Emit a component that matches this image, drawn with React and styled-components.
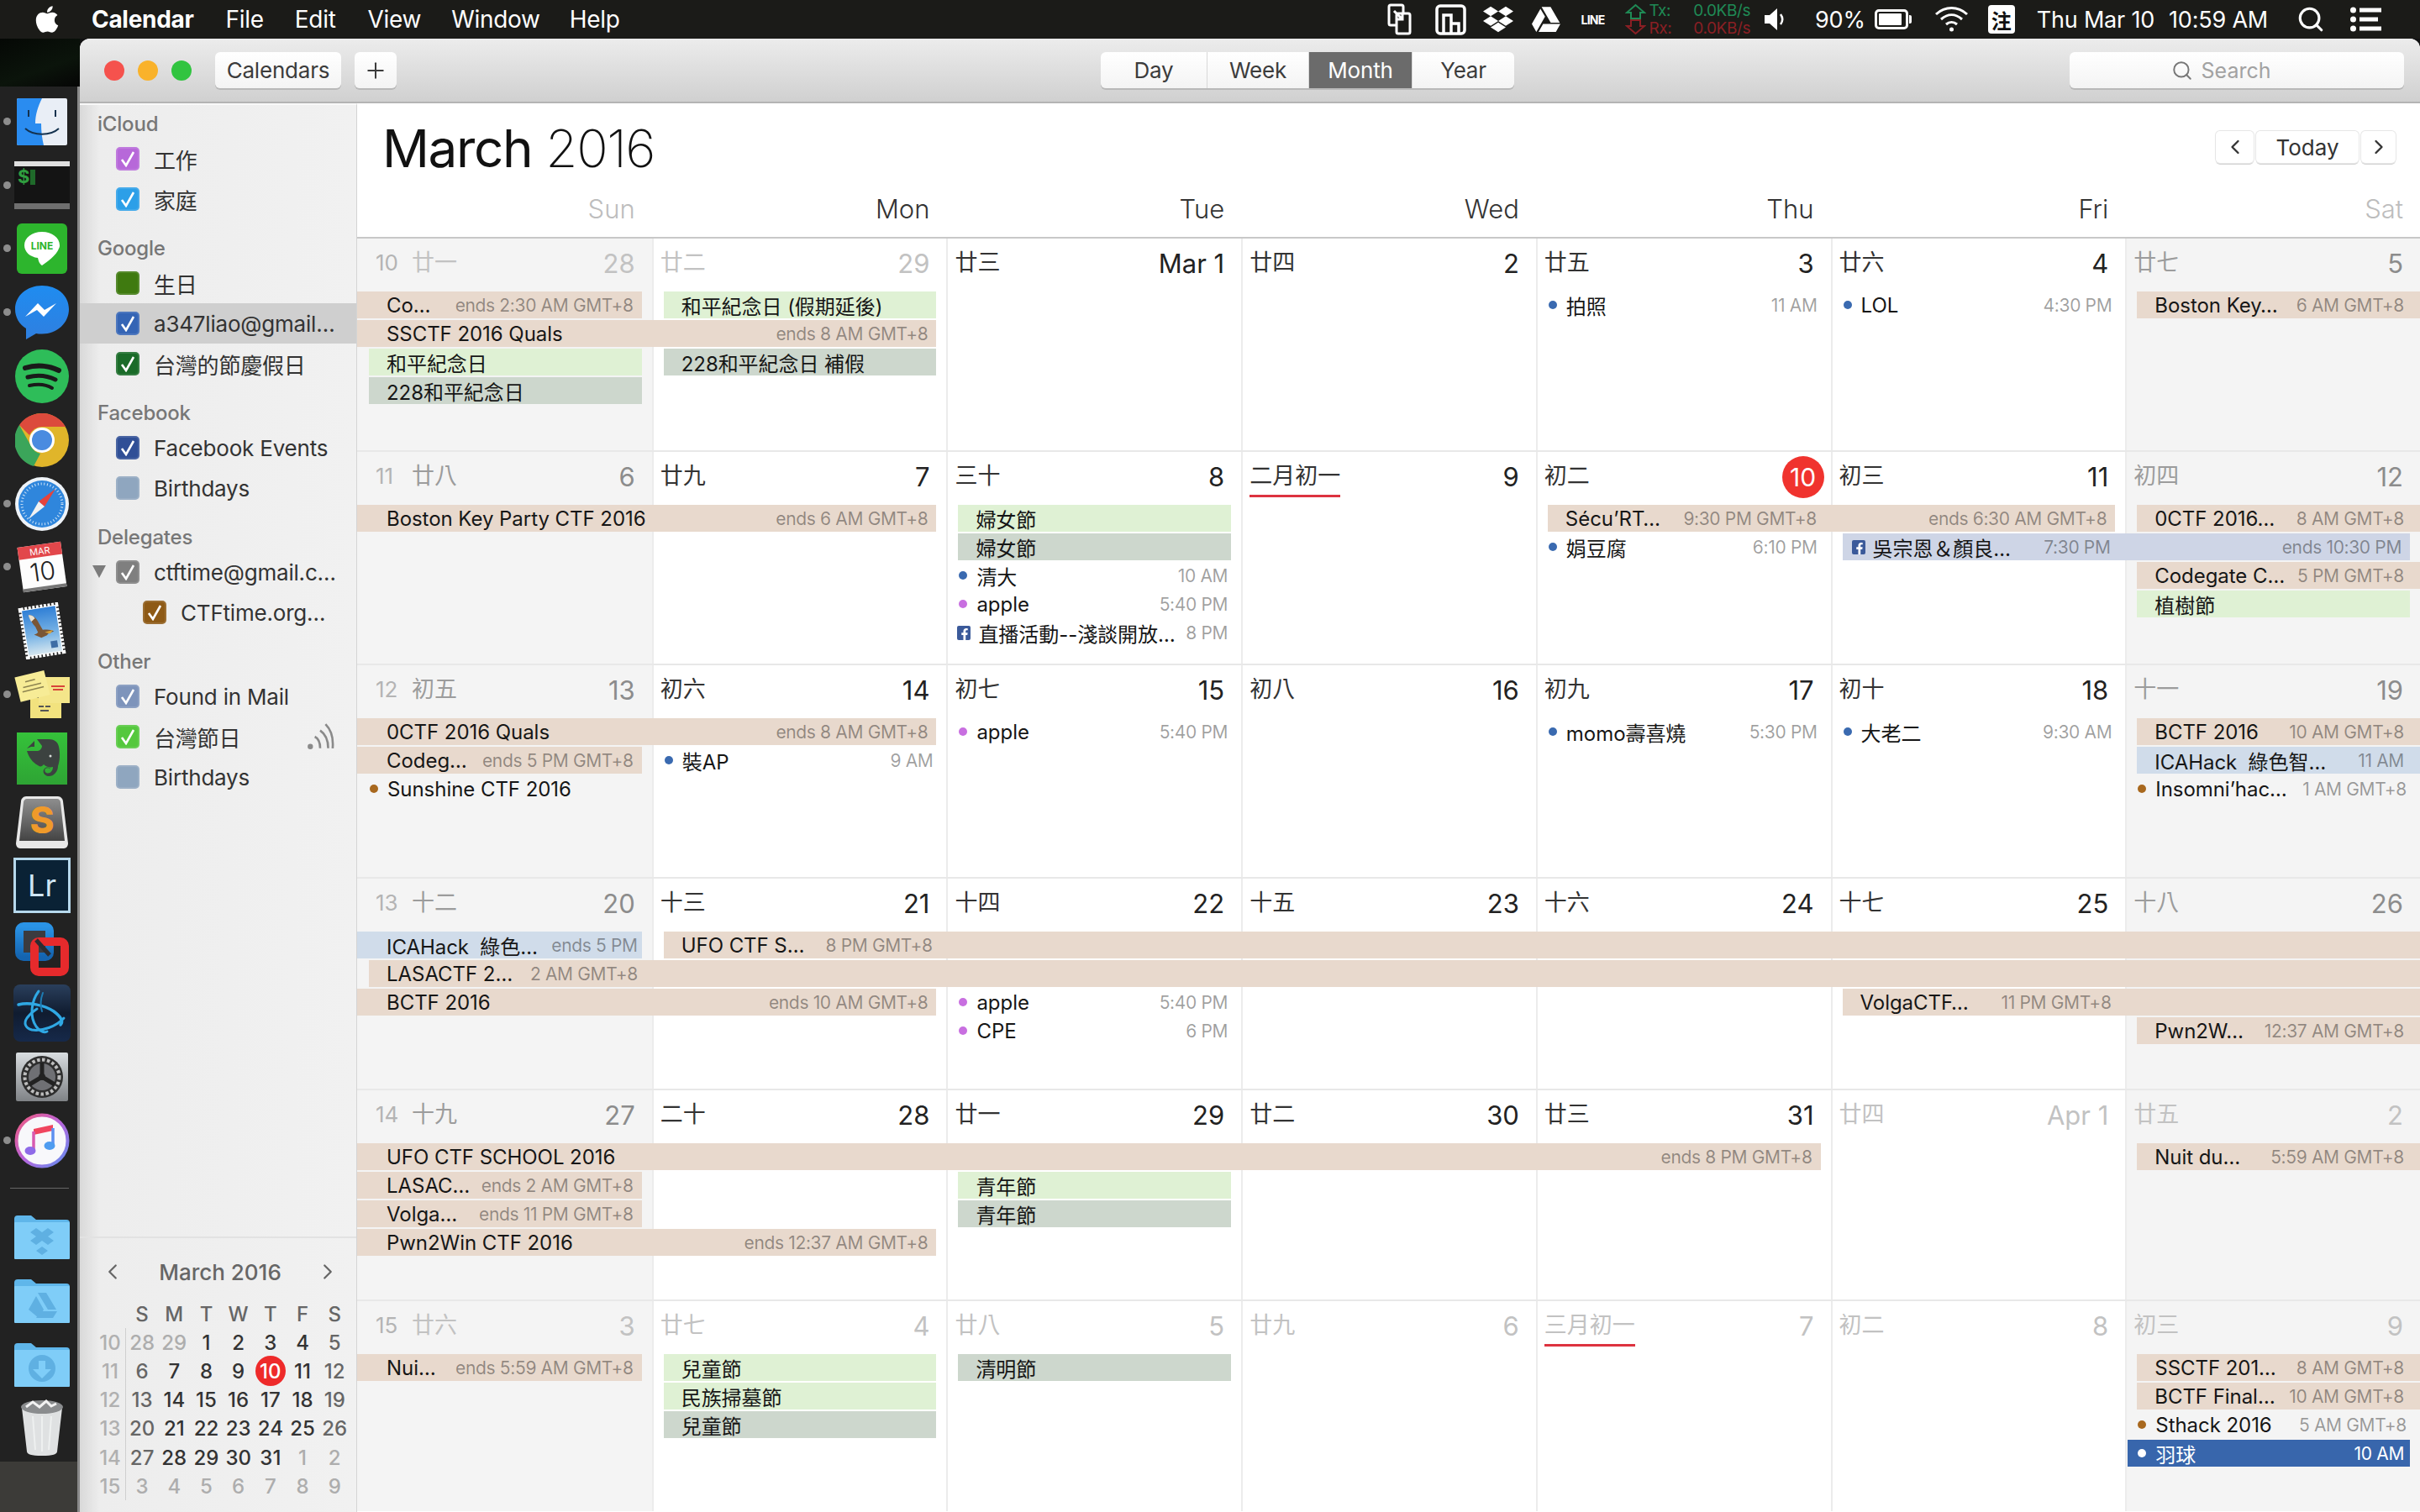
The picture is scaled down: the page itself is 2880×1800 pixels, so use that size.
import React from 'react';
import styled, { createGlobalStyle } from 'styled-components';
import { FaApple, FaDropbox, FaGoogleDrive, FaFacebookF } from 'react-icons/fa';
import { Search, Plus, ChevronLeft, ChevronRight } from 'lucide-react';

const SANS = `Inter, "Noto Sans CJK TC", sans-serif`;

const GlobalStyle = createGlobalStyle`
  html, body { margin: 0; padding: 0; background: #111; }
  body { font-family: ${SANS}; width: 2880px; height: 1800px; overflow: hidden; }
  * { box-sizing: border-box; }
`;

/* ---------- data ---------- */

const BLUE_DOT = '#3a6ab0';
const PURPLE_DOT = '#c86fe0';
const BROWN_DOT = '#a8681e';

const WEEKS = [
  {
    num: 10, height: 254, strong: true,
    days: [['廿一', '28', 1], ['廿二', '29', 1], ['廿三', 'Mar 1'], ['廿四', '2'], ['廿五', '3'], ['廿六', '4'], ['廿七', '5']],
    events: [
      { col: 1, row: 0, kind: 'peach', openLeft: true, title: 'Co…', time: 'ends 2:30 AM GMT+8' },
      { col: 2, row: 0, kind: 'green', title: '和平紀念日 (假期延後)' },
      { col: 1, span: 2, row: 1, kind: 'peach', openLeft: true, title: 'SSCTF 2016 Quals', ends: 'ends 8 AM GMT+8' },
      { col: 1, row: 2, kind: 'green', title: '和平紀念日' },
      { col: 2, row: 2, kind: 'sage', title: '228和平紀念日 補假' },
      { col: 1, row: 3, kind: 'sage', title: '228和平紀念日' },
      { col: 5, row: 0, kind: 'dot', dot: BLUE_DOT, title: '拍照', time: '11 AM' },
      { col: 6, row: 0, kind: 'dot', dot: BLUE_DOT, title: 'LOL', time: '4:30 PM' },
      { col: 7, row: 0, kind: 'peach', openRight: true, title: 'Boston Key…', time: '6 AM GMT+8' },
    ],
  },
  {
    num: 11, height: 254,
    days: [['廿八', '6'], ['廿九', '7'], ['三十', '8'], ['二月初一', '9', 0, 'first'], ['初二', '10', 0, 'today'], ['初三', '11'], ['初四', '12']],
    events: [
      { col: 1, span: 2, row: 0, kind: 'peach', openLeft: true, title: 'Boston Key Party CTF 2016', ends: 'ends 6 AM GMT+8' },
      { col: 3, row: 0, kind: 'green', title: '婦女節' },
      { col: 5, span: 2, row: 0, kind: 'peach', title: 'Sécu’RT…', time: '9:30 PM GMT+8', ends: 'ends 6:30 AM GMT+8' },
      { col: 7, row: 0, kind: 'peach', openRight: true, title: '0CTF 2016…', time: '8 AM GMT+8' },
      { col: 3, row: 1, kind: 'sage', title: '婦女節' },
      { col: 5, row: 1, kind: 'dot', dot: BLUE_DOT, title: '娟豆腐', time: '6:10 PM' },
      { col: 6, span: 2, row: 1, kind: 'lavender', fb: true, title: '吳宗恩＆顏良…', time: '7:30 PM', ends: 'ends 10:30 PM' },
      { col: 3, row: 2, kind: 'dot', dot: BLUE_DOT, title: '清大', time: '10 AM' },
      { col: 7, row: 2, kind: 'peach', openRight: true, title: 'Codegate C…', time: '5 PM GMT+8' },
      { col: 3, row: 3, kind: 'dot', dot: PURPLE_DOT, title: 'apple', time: '5:40 PM' },
      { col: 7, row: 3, kind: 'green', title: '植樹節' },
      { col: 3, row: 4, kind: 'dot', fb: true, title: '直播活動--淺談開放…', time: '8 PM' },
    ],
  },
  {
    num: 12, height: 254,
    days: [['初五', '13'], ['初六', '14'], ['初七', '15'], ['初八', '16'], ['初九', '17'], ['初十', '18'], ['十一', '19']],
    events: [
      { col: 1, span: 2, row: 0, kind: 'peach', openLeft: true, title: '0CTF 2016 Quals', ends: 'ends 8 AM GMT+8' },
      { col: 3, row: 0, kind: 'dot', dot: PURPLE_DOT, title: 'apple', time: '5:40 PM' },
      { col: 5, row: 0, kind: 'dot', dot: BLUE_DOT, title: 'momo壽喜燒', time: '5:30 PM' },
      { col: 6, row: 0, kind: 'dot', dot: BLUE_DOT, title: '大老二', time: '9:30 AM' },
      { col: 7, row: 0, kind: 'peach', openRight: true, title: 'BCTF 2016', time: '10 AM GMT+8' },
      { col: 1, row: 1, kind: 'peach', openLeft: true, title: 'Codeg…', time: 'ends 5 PM GMT+8' },
      { col: 2, row: 1, kind: 'dot', dot: BLUE_DOT, title: '裝AP', time: '9 AM' },
      { col: 7, row: 1, kind: 'blue', openRight: true, title: 'ICAHack  綠色智…', time: '11 AM' },
      { col: 1, row: 2, kind: 'dot', dot: BROWN_DOT, title: 'Sunshine CTF 2016' },
      { col: 7, row: 2, kind: 'dot', dot: BROWN_DOT, title: 'Insomni’hac…', time: '1 AM GMT+8' },
    ],
  },
  {
    num: 13, height: 252,
    days: [['十二', '20'], ['十三', '21'], ['十四', '22'], ['十五', '23'], ['十六', '24'], ['十七', '25'], ['十八', '26']],
    events: [
      { col: 1, row: 0, kind: 'blue', openLeft: true, pad: 5, title: 'ICAHack  綠色…', time: 'ends 5 PM' },
      { col: 2, span: 6, row: 0, kind: 'peach', openRight: true, title: 'UFO CTF S…', time: '8 PM GMT+8' },
      { col: 1, span: 7, row: 1, kind: 'peach', openRight: true, title: 'LASACTF 2…', time: '2 AM GMT+8' },
      { col: 1, span: 2, row: 2, kind: 'peach', openLeft: true, title: 'BCTF 2016', ends: 'ends 10 AM GMT+8' },
      { col: 3, row: 2, kind: 'dot', dot: PURPLE_DOT, title: 'apple', time: '5:40 PM' },
      { col: 6, span: 2, row: 2, kind: 'peach', openRight: true, title: 'VolgaCTF…', time: '11 PM GMT+8' },
      { col: 3, row: 3, kind: 'dot', dot: PURPLE_DOT, title: 'CPE', time: '6 PM' },
      { col: 7, row: 3, kind: 'peach', openRight: true, title: 'Pwn2W…', time: '12:37 AM GMT+8' },
    ],
  },
  {
    num: 14, height: 251,
    days: [['十九', '27'], ['二十', '28'], ['廿一', '29'], ['廿二', '30'], ['廿三', '31'], ['廿四', 'Apr 1', 1], ['廿五', '2', 1]],
    events: [
      { col: 1, span: 5, row: 0, kind: 'peach', openLeft: true, title: 'UFO CTF SCHOOL 2016', ends: 'ends 8 PM GMT+8' },
      { col: 7, row: 0, kind: 'peach', openRight: true, title: 'Nuit du…', time: '5:59 AM GMT+8' },
      { col: 1, row: 1, kind: 'peach', openLeft: true, title: 'LASAC…', time: 'ends 2 AM GMT+8' },
      { col: 3, row: 1, kind: 'green', title: '青年節' },
      { col: 1, row: 2, kind: 'peach', openLeft: true, title: 'Volga…', time: 'ends 11 PM GMT+8' },
      { col: 3, row: 2, kind: 'sage', title: '青年節' },
      { col: 1, span: 2, row: 3, kind: 'peach', openLeft: true, title: 'Pwn2Win CTF 2016', ends: 'ends 12:37 AM GMT+8' },
    ],
  },
  {
    num: 15, height: 252,
    days: [['廿六', '3', 1], ['廿七', '4', 1], ['廿八', '5', 1], ['廿九', '6', 1], ['三月初一', '7', 1, 'first'], ['初二', '8', 1], ['初三', '9', 1]],
    events: [
      { col: 1, row: 0, kind: 'peach', openLeft: true, title: 'Nui…', time: 'ends 5:59 AM GMT+8' },
      { col: 2, row: 0, kind: 'green', title: '兒童節' },
      { col: 3, row: 0, kind: 'sage', title: '清明節' },
      { col: 7, row: 0, kind: 'peach', openRight: true, title: 'SSCTF 201…', time: '8 AM GMT+8' },
      { col: 2, row: 1, kind: 'green', title: '民族掃墓節' },
      { col: 7, row: 1, kind: 'peach', openRight: true, title: 'BCTF Final…', time: '10 AM GMT+8' },
      { col: 2, row: 2, kind: 'sage', title: '兒童節' },
      { col: 7, row: 2, kind: 'dot', dot: BROWN_DOT, title: 'Sthack 2016', time: '5 AM GMT+8' },
      { col: 7, row: 3, kind: 'selected', dot: '#fff', title: '羽球', time: '10 AM' },
    ],
  },
];

const WEEKDAYS = ['Sun', 'Mon', 'Tue', 'Wed', 'Thu', 'Fri', 'Sat'];

const SIDEBAR = [
  { name: 'iCloud', items: [
    { label: '工作', color: '#b768d9', checked: true },
    { label: '家庭', color: '#2c9fe8', checked: true },
  ] },
  { name: 'Google', items: [
    { label: '生日', color: '#3f7a10' },
    { label: 'a347liao@gmail…', color: '#3565b5', checked: true, selected: true },
    { label: '台灣的節慶假日', color: '#1a6b28', checked: true },
  ] },
  { name: 'Facebook', items: [
    { label: 'Facebook Events', color: '#304f96', checked: true },
    { label: 'Birthdays', color: '#8fa6bf' },
  ] },
  { name: 'Delegates', items: [
    { label: 'ctftime@gmail.c…', color: '#7f7f7f', checked: true, expander: true },
    { label: 'CTFtime.org…', color: '#8e5a16', checked: true, nested: true },
  ] },
  { name: 'Other', items: [
    { label: 'Found in Mail', color: '#7e94bb', checked: true },
    { label: '台灣節日', color: '#55c83e', checked: true, feed: true },
    { label: 'Birthdays', color: '#8fa6bf' },
  ] },
];

const MINI_WEEKS = [
  ['10', ['28', 1], ['29', 1], '1', '2', '3', '4', '5'],
  ['11', '6', '7', '8', '9', ['10', 2], '11', '12'],
  ['12', '13', '14', '15', '16', '17', '18', '19'],
  ['13', '20', '21', '22', '23', '24', '25', '26'],
  ['14', '27', '28', '29', '30', '31', ['1', 1], ['2', 1]],
  ['15', ['3', 1], ['4', 1], ['5', 1], ['6', 1], ['7', 1], ['8', 1], ['9', 1]],
];

/* ---------- menu bar ---------- */

const Root = styled.div`
  width: 2880px;
  height: 1800px;
  display: flex;
  flex-direction: column;
  overflow: hidden;
`;

const MenuBar = styled.header`
  height: 46px;
  flex: none;
  background: #1b1b18;
  color: #fff;
  display: flex;
  align-items: center;
  font-size: 28px;
  padding: 0 46px 0 38px;
`;

const MenuItem = styled.span`
  margin-left: ${p => p.$gap}px;
  font-weight: ${p => (p.$bold ? 700 : 400)};
  letter-spacing: -0.3px;
`;

const Tray = styled.div`
  margin-left: auto;
  display: flex;
  align-items: center;
  height: 100%;
`;

const TrayItem = styled.span`
  margin-left: ${p => p.$gap || 0}px;
  display: flex;
  align-items: center;
  font-size: 27px;
  letter-spacing: -0.2px;
  white-space: nowrap;
`;

const NetColumn = styled.span`
  display: flex;
  flex-direction: column;
  font-size: 19px;
  line-height: 21px;
  letter-spacing: -0.4px;
`;

const NetLine = styled.span`
  color: ${p => p.$color};
`;

const ImeBadge = styled.span`
  width: 32px;
  height: 34px;
  border-radius: 4px;
  background: #fff;
  color: #111;
  font-size: 24px;
  font-weight: 700;
  display: flex;
  align-items: center;
  justify-content: center;
`;

const BatteryBody = styled.span`
  width: 40px;
  height: 24px;
  border: 3px solid #fff;
  border-radius: 5px;
  padding: 2px;
  display: block;
  position: relative;
  &::before {
    content: '';
    display: block;
    height: 100%;
    width: 90%;
    background: #fff;
    border-radius: 1px;
  }
  &::after {
    content: '';
    position: absolute;
    right: -7px;
    top: 4px;
    width: 3px;
    height: 10px;
    background: #fff;
    border-radius: 0 2px 2px 0;
  }
`;

const TinyLine = styled.span`
  font-size: 14px;
  font-weight: 700;
  letter-spacing: -0.8px;
`;

const SnapIcon = () => (
  <svg width="29" height="38" viewBox="0 0 29 38" fill="none" stroke="#fff" strokeWidth="3">
    <rect x="2" y="2" width="17" height="24" rx="2" />
    <rect x="11" y="12" width="16" height="24" rx="2" fill="#1b1b18" />
    <path d="M8 9l10 10M18 13v6h-6" />
  </svg>
);

const BracketIcon = () => (
  <svg width="37" height="38" viewBox="0 0 37 38" fill="none" stroke="#fff" strokeWidth="3.5">
    <rect x="2" y="3" width="33" height="33" rx="4" />
    <path d="M10 36V14h9v22M19 24h9v12" />
  </svg>
);

const NetHome = ({ color, down }) => (
  <svg width="25" height="19" viewBox="0 0 25 19" fill="none" stroke={color} strokeWidth="2" style={{ transform: down ? 'scaleY(-1)' : 'none' }}>
    <path d="M12.5 2L2 11h5v7h11v-7h5z" />
  </svg>
);

const VolumeIcon = () => (
  <svg width="26" height="30" viewBox="0 0 26 30">
    <path d="M1 10h6l9-8v26l-9-8H1z" fill="#fff" />
    <path d="M20 9c3 4 3 8 0 12" stroke="#fff" strokeWidth="2.5" fill="none" />
  </svg>
);

const WifiIcon = () => (
  <svg width="41" height="32" viewBox="0 0 41 32" fill="none" stroke="#fff" strokeWidth="3">
    <path d="M2 10c11-10 26-10 37 0M8 16c8-7 17-7 25 0M14 22c4-3.500 9-3.500 13 0" />
    <circle cx="20.500" cy="28" r="2.500" fill="#fff" stroke="none" />
  </svg>
);

const ListIcon = () => (
  <svg width="37" height="30" viewBox="0 0 37 30" fill="#fff">
    <circle cx="3.500" cy="4" r="3.500" /><circle cx="3.500" cy="15" r="3.500" /><circle cx="3.500" cy="26" r="3.500" />
    <rect x="11" y="1.500" width="26" height="5" /><rect x="11" y="12.500" width="22" height="5" /><rect x="11" y="23.500" width="26" height="5" />
  </svg>
);

const TopMenu = () => (
  <MenuBar>
    <FaApple size={36} color="#fff" />
    <MenuItem $gap={35} $bold>Calendar</MenuItem>
    <MenuItem $gap={38}>File</MenuItem>
    <MenuItem $gap={37}>Edit</MenuItem>
    <MenuItem $gap={38}>View</MenuItem>
    <MenuItem $gap={36}>Window</MenuItem>
    <MenuItem $gap={35}>Help</MenuItem>
    <Tray>
      <TrayItem><SnapIcon /></TrayItem>
      <TrayItem $gap={28}><BracketIcon /></TrayItem>
      <TrayItem $gap={20}><FaDropbox size={36} /></TrayItem>
      <TrayItem $gap={22}><FaGoogleDrive size={34} /></TrayItem>
      <TrayItem $gap={25}><TinyLine>LINE</TinyLine></TrayItem>
      <TrayItem $gap={25}>
        <NetColumn>
          <NetHome color="#1f8a55" />
          <NetHome color="#8a1f24" down />
        </NetColumn>
      </TrayItem>
      <TrayItem $gap={3}>
        <NetColumn>
          <NetLine $color="#1f8a55">Tx:</NetLine>
          <NetLine $color="#8a1f24">Rx:</NetLine>
        </NetColumn>
      </TrayItem>
      <TrayItem $gap={26}>
        <NetColumn>
          <NetLine $color="#1f8a55">0.0KB/s</NetLine>
          <NetLine $color="#8a1f24">0.0KB/s</NetLine>
        </NetColumn>
      </TrayItem>
      <TrayItem $gap={16}><VolumeIcon /></TrayItem>
      <TrayItem $gap={35}>90%</TrayItem>
      <TrayItem $gap={11}><BatteryBody /></TrayItem>
      <TrayItem $gap={31}><WifiIcon /></TrayItem>
      <TrayItem $gap={23}><ImeBadge>注</ImeBadge></TrayItem>
      <TrayItem $gap={26}>Thu Mar 10</TrayItem>
      <TrayItem $gap={17}>10:59 AM</TrayItem>
      <TrayItem $gap={34}><Search size={34} strokeWidth={2.2} /></TrayItem>
      <TrayItem $gap={30}><ListIcon /></TrayItem>
    </Tray>
  </MenuBar>
);

/* ---------- dock ---------- */

const Desktop = styled.div`
  flex: 1;
  display: flex;
  min-height: 0;
`;

const DockColumn = styled.aside`
  width: 95px;
  flex: none;
  display: flex;
  flex-direction: column;
  background: #0a0c08;
`;

const WallpaperTop = styled.div`
  height: 57px;
  flex: none;
  background: linear-gradient(160deg, #050805, #0b140b 60%, #050505);
`;

const Dock = styled.nav`
  height: 1637px;
  flex: none;
  background: #222;
  border-right: 3px solid #8a8a8a;
  padding-top: 4px;
  display: flex;
  flex-direction: column;
`;

const WallpaperBottom = styled.div`
  flex: 1;
  background: #3c3b38;
  border-right: 3px solid #8a8a8a;
`;

const DockSlot = styled.div`
  height: 75.8px;
  flex: none;
  display: flex;
  align-items: center;
  justify-content: center;
  position: relative;
  padding-left: 7px;
`;

const RunningDot = styled.span`
  position: absolute;
  left: 4px;
  top: 50%;
  margin-top: -5px;
  width: 9px;
  height: 9px;
  border-radius: 50%;
  background: #8d8d8d;
`;

const DockDivider = styled.div`
  height: 1px;
  background: #666;
  margin: 18px 10px 20px 12px;
  flex: none;
`;

const FinderIcon = () => (
  <svg width="60" height="56" viewBox="0 0 60 56">
    <rect width="60" height="56" rx="2" fill="#e9eef6" />
    <path d="M2 0h28c-5 10-8 20-8 30h7c0 9 1 18 3 26H2a2 2 0 0 1-2-2V2a2 2 0 0 1 2-2z" fill="#2a8cf0" />
    <path d="M14 14v8M46 14v8" stroke="#14324f" strokeWidth="2" />
    <path d="M10 36c10 9 30 9 40 0" stroke="#14324f" strokeWidth="2" fill="none" />
  </svg>
);

const TerminalIcon = () => (
  <svg width="68" height="58" viewBox="0 0 68 58">
    <rect x="1" y="0" width="66" height="6" fill="#dfdfdf" />
    <rect x="1" y="6" width="66" height="44" fill="#141414" />
    <rect x="1" y="50" width="66" height="7" fill="#6f6f6f" />
    <text x="5" y="26" fontSize="22" fontWeight="700" fill="#2f9e3f" fontFamily="Inter, sans-serif">$</text>
    <rect x="20" y="10" width="6" height="18" fill="#1f6a2a" />
  </svg>
);

const LineIcon = () => (
  <svg width="60" height="60" viewBox="0 0 60 60">
    <rect width="60" height="60" rx="6" fill="#2db52d" />
    <path d="M30 10c-12 0-21 7-21 16 0 8 7 14 16 15 1 3 1 6 5 9 6-4 17-12 20-20 1-2 1-3 1-4 0-9-9-16-21-16z" fill="#fff" />
    <text x="30" y="31" fontSize="12" fontWeight="700" fill="#2db52d" textAnchor="middle" fontFamily="Inter, sans-serif">LINE</text>
  </svg>
);

const MessengerIcon = () => (
  <svg width="66" height="66" viewBox="0 0 66 66">
    <defs>
      <linearGradient id="msgBlue" x1="0" y1="0" x2="0" y2="1">
        <stop offset="0" stopColor="#1f8cf0" />
        <stop offset="1" stopColor="#2f7fe0" />
      </linearGradient>
    </defs>
    <path d="M33 1C15 1 1 13 1 29c0 10 5 18 13 23v13l12-7c2 .5 4 .5 7 .5 18 0 32-13 32-29.500S51 1 33 1z" fill="url(#msgBlue)" />
    <path d="M13 38l15-16 8 8 14-8-15 16-8-8z" fill="#fff" />
  </svg>
);

const SpotifyIcon = () => (
  <svg width="66" height="66" viewBox="0 0 66 66">
    <circle cx="33" cy="33" r="32" fill="#2ebd59" />
    <g stroke="#1a1a1a" fill="none" strokeLinecap="round">
      <path d="M13 23c13-4 28-3 40 3" strokeWidth="6" />
      <path d="M16 34c11-3 23-2 33 3" strokeWidth="5" />
      <path d="M18 44c9-2 19-2 27 3" strokeWidth="4" />
    </g>
  </svg>
);

const ChromeIcon = () => (
  <svg width="64" height="64" viewBox="0 0 64 64">
    <circle cx="32" cy="32" r="32" fill="#e0b52a" />
    <path d="M32 0a32 32 0 0 1 28 16H32a16 16 0 0 0-15 10L5 14A32 32 0 0 1 32 0z" fill="#dc4a3c" />
    <path d="M5 14l14 25a16 16 0 0 0 11 9l-8 15A32 32 0 0 1 5 14z" fill="#3ba55a" />
    <circle cx="32" cy="32" r="15" fill="#fff" />
    <circle cx="32" cy="32" r="12" fill="#4a8be0" />
  </svg>
);

const SafariIcon = () => (
  <svg width="64" height="64" viewBox="0 0 64 64">
    <circle cx="32" cy="32" r="32" fill="#eef3f8" />
    <circle cx="32" cy="32" r="28" fill="#2f86dc" />
    <circle cx="32" cy="32" r="24" fill="none" stroke="#cfe4f7" strokeWidth="3" strokeDasharray="1 2.700" />
    <path d="M48 14L28 29l7 6z" fill="#e5433c" />
    <path d="M16 50l12-21 7 6z" fill="#f2f2f2" />
  </svg>
);

const CalendarIcon = () => (
  <svg width="62" height="64" viewBox="0 0 62 64">
    <g transform="rotate(-8 31 32)">
      <rect x="5" y="5" width="52" height="54" fill="#fdfdfd" />
      <rect x="5" y="5" width="52" height="15" fill="#e2474b" />
      <rect x="5" y="55" width="52" height="4" fill="#777" />
      <text x="31" y="17" fontSize="11" fill="#fff" textAnchor="middle" fontFamily="Inter, sans-serif">MAR</text>
      <text x="31" y="48" fontSize="30" fill="#222" textAnchor="middle" fontFamily="Inter, sans-serif" fontWeight="300">10</text>
    </g>
  </svg>
);

const MailIcon = () => (
  <svg width="60" height="68" viewBox="0 0 60 68">
    <defs>
      <linearGradient id="mailSky" x1="0" y1="0" x2="0" y2="1">
        <stop offset="0" stopColor="#2f7fd6" />
        <stop offset=".6" stopColor="#7db6e6" />
        <stop offset="1" stopColor="#d5e6ef" />
      </linearGradient>
    </defs>
    <g transform="rotate(-9 30 34)">
      <rect x="9" y="6" width="42" height="56" fill="#fff" stroke="#fff" strokeWidth="6" strokeDasharray="3 1.600" />
      <rect x="10" y="7" width="40" height="54" fill="url(#mailSky)" />
      <path d="M17 13c5 0 9 5 11 12l3 8c5 0 10 1 13 4-4 0-7 1-9 3l-7 2-8-5c2 0 4-1 5-2l-2-7c-3-4-5-10-6-15z" fill="#7a5636" />
      <path d="M17 13c3 0 6 2 7 5-2 1-4 3-5 3-1-3-2-5-2-8z" fill="#e9e2d3" />
      <path d="M33 36l10-1-4 4z" fill="#d8a23a" />
      <rect x="38" y="48" width="8" height="8" fill="#3d6da5" />
    </g>
  </svg>
);

const StickiesIcon = () => (
  <svg width="68" height="60" viewBox="0 0 68 60">
    <rect x="20" y="34" width="37" height="24" fill="#f2e27e" />
    <path d="M30 44h6M38 44h6M32 49h10" stroke="#555" strokeWidth="2" />
    <rect x="30" y="9" width="37" height="31" fill="#f4e68a" />
    <g transform="rotate(-14 22 22)">
      <rect x="5" y="5" width="36" height="30" fill="#f7ec96" />
      <path d="M16 13h12M12 19h22M10 24h26" stroke="#8d8450" strokeWidth="1.500" />
    </g>
    <path d="M45 20h16M47 24h12" stroke="#d8443a" strokeWidth="2" />
  </svg>
);

const EvernoteIcon = () => (
  <svg width="60" height="62" viewBox="0 0 60 62">
    <defs>
      <linearGradient id="noteGreen" x1="0" y1="0" x2="0" y2="1">
        <stop offset="0" stopColor="#35c23a" />
        <stop offset="1" stopColor="#2ea434" />
      </linearGradient>
    </defs>
    <rect width="60" height="62" fill="url(#noteGreen)" />
    <path d="M12 19l9-9v7h-4zM24 8h14c6 0 11 3 12 9 2 9 1 17-1 23 0 7-6 13-12 12-5-1-7-6-4-9 2-2 6-2 7 1-1-2-4-2-6-1 0 0-2 3 1 5 4 2 8-2 8-7-4 1-8 0-11-3-2 3-5 3-7 1-6-3-11-10-13-17h13c2 0 5-3 5-6z" fill="#3c4240" />
    <circle cx="40" cy="28" r="1.500" fill="#d8dcd8" />
  </svg>
);

const SublimeIcon = () => (
  <svg width="66" height="62" viewBox="0 0 66 62">
    <defs>
      <linearGradient id="subKey" x1="0" y1="0" x2="0" y2="1">
        <stop offset="0" stopColor="#8e8e8e" />
        <stop offset="1" stopColor="#444" />
      </linearGradient>
    </defs>
    <path d="M8 6c0-3 3-6 6-6h38c3 0 6 3 6 6l6 50c0 3-2 6-5 6H7c-3 0-5-3-5-6z" fill="#e8e8e8" />
    <path d="M11 7c0-2 2-4 4-4h36c2 0 4 2 4 4l5 46H6z" fill="url(#subKey)" />
    <text x="33" y="44" fontSize="44" fontWeight="800" fill="#ef9a2a" textAnchor="middle" fontFamily="Inter, sans-serif">S</text>
  </svg>
);

const LightroomIcon = () => (
  <svg width="68" height="66" viewBox="0 0 68 66">
    <rect x="1.500" y="1.500" width="65" height="63" fill="#0a2235" stroke="#b6d8ec" strokeWidth="3" />
    <text x="34" y="46" fontSize="36" fill="#cfe6f4" textAnchor="middle" fontFamily="Inter, sans-serif">Lr</text>
  </svg>
);

const VmwareIcon = () => (
  <svg width="66" height="66" viewBox="0 0 66 66">
    <defs>
      <linearGradient id="vmBlue" x1="0" y1="0" x2="0" y2="1">
        <stop offset="0" stopColor="#2a93e6" />
        <stop offset="1" stopColor="#1464b0" />
      </linearGradient>
    </defs>
    <rect x="6" y="6" width="36" height="36" rx="5" fill="#3b3b3f" stroke="url(#vmBlue)" strokeWidth="10" />
    <rect x="24" y="24" width="36" height="36" rx="5" fill="none" stroke="#e62a2c" strokeWidth="10" />
    <path d="M26 22l16 18" stroke="#2c2c30" strokeWidth="5" />
  </svg>
);

const BattleNetIcon = () => (
  <svg width="68" height="68" viewBox="0 0 68 68">
    <defs>
      <linearGradient id="bnBack" x1="0" y1="0" x2="0" y2="1">
        <stop offset="0" stopColor="#2a3f5c" />
        <stop offset=".5" stopColor="#101c30" />
        <stop offset="1" stopColor="#16294a" />
      </linearGradient>
    </defs>
    <rect width="68" height="68" rx="8" fill="url(#bnBack)" />
    <g fill="none" stroke="#2fa8e4" strokeLinecap="round">
      <path d="M6 24c12-3 30 0 42 8 8 6 12 12 8 16" strokeWidth="3.500" />
      <path d="M30 8c-9 12-11 30-3 42 4 5 9 8 13 6" strokeWidth="3" />
      <path d="M60 40c-9 10-26 16-38 14-8-2-10-8-6-14 3-4 7-8 12-11" strokeWidth="3" />
      <path d="M35 10c-3 8-3 16-1 22" strokeWidth="2" stroke="#1d7cb4" />
    </g>
  </svg>
);

const GearIcon = () => (
  <svg width="62" height="58" viewBox="0 0 62 58">
    <defs>
      <linearGradient id="prefGrey" x1="0" y1="0" x2="0" y2="1">
        <stop offset="0" stopColor="#d9dde0" />
        <stop offset="1" stopColor="#7f8286" />
      </linearGradient>
    </defs>
    <rect width="62" height="58" rx="2" fill="url(#prefGrey)" />
    <circle cx="31" cy="29" r="25" fill="#2e2e2e" />
    <circle cx="31" cy="29" r="20.500" fill="none" stroke="#bdbdbd" strokeWidth="4" strokeDasharray="3.500 2.500" />
    <circle cx="31" cy="29" r="16" fill="#6f7074" />
    <path d="M31 29V12M31 29L16 38M31 29l15 9" stroke="#222" strokeWidth="5" />
    <circle cx="31" cy="29" r="4" fill="#222" />
  </svg>
);

const ItunesIcon = () => (
  <svg width="66" height="66" viewBox="0 0 66 66">
    <defs>
      <linearGradient id="tuneRim" x1="0" y1="0" x2="1" y2="1">
        <stop offset="0" stopColor="#f25a7c" />
        <stop offset=".5" stopColor="#b865dc" />
        <stop offset="1" stopColor="#5f8ff0" />
      </linearGradient>
    </defs>
    <circle cx="33" cy="33" r="30.500" fill="#f8f8fb" stroke="url(#tuneRim)" strokeWidth="4" />
    <path d="M23 19l23-5v7l-23 5z" fill="#f0455f" />
    <path d="M23 22v22" stroke="#d85ab0" strokeWidth="3.500" />
    <path d="M46 18v20" stroke="#5e8ff0" strokeWidth="3.500" />
    <ellipse cx="19" cy="45" rx="6.500" ry="5" fill="#8f6ae8" />
    <ellipse cx="42" cy="39" rx="6.500" ry="5" fill="#4f9cf0" />
  </svg>
);

const FolderIcon = ({ glyph }) => (
  <svg width="68" height="54" viewBox="0 0 68 54">
    <path d="M1 6a4 4 0 0 1 4-4h16l6 5h36a4 4 0 0 1 4 4v41H1z" fill="#5fb6ea" />
    <rect x="1" y="10" width="66" height="44" rx="1" fill="#7fcdf8" />
    <g fill="#5fb0e2" transform="translate(34 32)">{glyph}</g>
  </svg>
);

const TrashIcon = () => (
  <svg width="54" height="68" viewBox="0 0 54 68">
    <path d="M3 10l6 52c0 3 5 5 18 5s18-2 18-5l6-52z" fill="#dfe1e2" />
    <ellipse cx="27" cy="9" rx="25" ry="8" fill="#8a8c8e" />
    <path d="M8 9l8-6 8 6 8-7 6 6 6-3" stroke="#f2f2f2" strokeWidth="3" fill="none" />
    <path d="M16 20l3 40M27 20v42M38 20l-3 40" stroke="#eef0f0" strokeWidth="2" />
  </svg>
);

const DOCK_APPS = [
  { icon: <FinderIcon />, running: true },
  { icon: <TerminalIcon />, running: true },
  { icon: <LineIcon />, running: true },
  { icon: <MessengerIcon />, running: true },
  { icon: <SpotifyIcon /> },
  { icon: <ChromeIcon /> },
  { icon: <SafariIcon />, running: true },
  { icon: <CalendarIcon />, running: true },
  { icon: <MailIcon /> },
  { icon: <StickiesIcon />, running: true },
  { icon: <EvernoteIcon /> },
  { icon: <SublimeIcon /> },
  { icon: <LightroomIcon /> },
  { icon: <VmwareIcon /> },
  { icon: <BattleNetIcon /> },
  { icon: <GearIcon /> },
  { icon: <ItunesIcon />, running: true },
];

const DOCK_STACKS = [
  <FolderIcon key="dropbox" glyph={<path d="M-14-10l7-5 7 5 7-5 7 5-7 5 7 5-7 5-7-5-7 5-7-5 7-5zM-7 12l7-5 7 5-7 5z" />} />,
  <FolderIcon key="drive" glyph={<path d="M-5-14h10L17 6H7zM-7-10L2 6-4 16-16 6zM-2 8h20l-5 8H-7z" />} />,
  <FolderIcon key="downloads" glyph={<path d="M0-16a16 16 0 1 1 0 32A16 16 0 0 1 0-16zM-4-9v10h-7l11 11L11 1H4V-9z" />} />,
  <TrashIcon key="trash" />,
];

const LeftDock = () => (
  <DockColumn>
    <WallpaperTop />
    <Dock>
      {DOCK_APPS.map((app, i) => (
        <DockSlot key={i}>
          {app.running && <RunningDot />}
          {app.icon}
        </DockSlot>
      ))}
      <DockDivider />
      {DOCK_STACKS.map((icon, i) => (
        <DockSlot key={i}>{icon}</DockSlot>
      ))}
    </Dock>
    <WallpaperBottom />
  </DockColumn>
);

/* ---------- window chrome ---------- */

const Window = styled.main`
  flex: 1;
  min-width: 0;
  display: flex;
  flex-direction: column;
  border-radius: 12px 12px 0 0;
  overflow: hidden;
  background: #fff;
`;

const Toolbar = styled.div`
  height: 77px;
  flex: none;
  background: linear-gradient(#ececec, #d0d0d0);
  border-bottom: 2px solid #b4b4b4;
  display: flex;
  align-items: center;
  padding: 0 19px 0 29px;
`;

const Light = styled.span`
  width: 24px;
  height: 24px;
  border-radius: 50%;
  margin-right: 16px;
  background: ${p => p.$color};
`;

const ToolButton = styled.button`
  height: 43px;
  width: ${p => p.$width}px;
  margin-left: ${p => p.$gap}px;
  padding: 0;
  border: none;
  border-radius: 6px;
  background: linear-gradient(#fff, #f4f4f4);
  box-shadow: 0 2px 0 #b9b9b9;
  font: 26px ${SANS};
  letter-spacing: -0.2px;
  color: #3c3c3c;
  display: flex;
  align-items: center;
  justify-content: center;
`;

const Segments = styled.div`
  margin-left: 838px;
  display: grid;
  grid-template-columns: 126px 121px 123px 122px;
  height: 43px;
  border-radius: 6px;
  overflow: hidden;
  box-shadow: 0 2px 0 #b9b9b9;
`;

const Segment = styled.div`
  display: flex;
  align-items: center;
  justify-content: center;
  font-size: 26px;
  letter-spacing: -0.2px;
  color: ${p => (p.$active ? '#fff' : '#3c3c3c')};
  background: ${p => (p.$active ? '#6b6b6b' : 'linear-gradient(#fff, #f4f4f4)')};
  border-left: ${p => (p.$first ? 'none' : '1px solid #d8d8d8')};
`;

const SearchBox = styled.div`
  margin-left: auto;
  width: 398px;
  height: 43px;
  border-radius: 6px;
  background: linear-gradient(#fff, #f4f4f4);
  box-shadow: 0 2px 0 #b9b9b9;
  display: flex;
  align-items: center;
  justify-content: center;
  gap: 10px;
  padding-right: 38px;
  font-size: 25px;
  color: #a2a2a2;
`;

const Body = styled.div`
  flex: 1;
  display: flex;
  min-height: 0;
`;

/* ---------- sidebar ---------- */

const Sidebar = styled.aside`
  width: 330px;
  flex: none;
  display: flex;
  flex-direction: column;
  background: linear-gradient(to right, #d9d9d9, #ededed 24px, #f1f1f1);
  border-right: 1px solid #d4d4d4;
  border-top: 2px solid #f8f8f8;
  padding-top: 4px;
`;

const GroupName = styled.div`
  height: 36px;
  margin-top: ${p => (p.$first ? 0 : 16)}px;
  padding-left: 21px;
  font-size: 24px;
  font-weight: 500;
  color: #777;
  letter-spacing: -0.2px;
  display: flex;
  align-items: center;
`;

const CalendarRow = styled.div`
  height: 48px;
  display: flex;
  align-items: center;
  padding-left: ${p => (p.$nested ? 75 : 43)}px;
  font-size: 26px;
  letter-spacing: -0.2px;
  color: #333;
  position: relative;
  background: ${p => (p.$selected ? '#cfcfcf' : 'transparent')};
`;

const CheckBox = styled.span`
  width: 28px;
  height: 28px;
  border-radius: 5px;
  background: ${p => p.$color};
  box-shadow: inset 0 0 0 2px rgba(255, 255, 255, 0.12);
  margin-right: 17px;
  flex: none;
  display: flex;
  align-items: center;
  justify-content: center;
`;

const Expander = styled.span`
  position: absolute;
  left: 15px;
  top: 16px;
  width: 0;
  height: 0;
  border-left: 8px solid transparent;
  border-right: 8px solid transparent;
  border-top: 15px solid #7c7c7c;
`;

const FeedIcon = styled.svg`
  margin-left: auto;
  margin-right: 26px;
`;

const CheckMark = () => (
  <svg width="18" height="20" viewBox="0 0 18 20" fill="none" stroke="#fff" strokeWidth="2.600">
    <path d="M2 11l5 7L16 2" />
  </svg>
);

const MiniCal = styled.section`
  margin-top: auto;
  height: 328px;
  border-top: 2px solid #e2e2e2;
`;

const MiniHead = styled.div`
  height: 80px;
  padding: 0 19px 0 24px;
  display: flex;
  align-items: center;
  justify-content: space-between;
  font-size: 26px;
  font-weight: 500;
  color: #666;
`;

const MiniGrid = styled.div`
  display: grid;
  grid-template-columns: 37px repeat(7, 38.2px);
  grid-auto-rows: 34.2px;
  padding-left: 18px;
  margin-top: -7px;
`;

const MiniCell = styled.span`
  display: flex;
  align-items: center;
  justify-content: center;
  font-size: 24px;
  font-weight: 500;
  color: ${p => p.$color};
  border-right: ${p => (p.$rule ? '1px solid #cfcfcf' : 'none')};
`;

const MiniToday = styled.span`
  width: 36px;
  height: 36px;
  border-radius: 50%;
  background: #ee2a2a;
  color: #fff;
  display: flex;
  align-items: center;
  justify-content: center;
`;

const MiniMonth = () => (
  <MiniCal>
    <MiniHead>
      <ChevronLeft size={30} strokeWidth={1.8} color="#666" />
      March 2016
      <ChevronRight size={30} strokeWidth={1.8} color="#666" />
    </MiniHead>
    <MiniGrid>
      <MiniCell />
      {['S', 'M', 'T', 'W', 'T', 'F', 'S'].map((d, i) => (
        <MiniCell key={i} $color="#666">{d}</MiniCell>
      ))}
      {MINI_WEEKS.map(([num, ...days]) => (
        <React.Fragment key={num}>
          <MiniCell $rule $color="#b0b0b0">{num}</MiniCell>
          {days.map((d, i) => {
            const [label, state] = Array.isArray(d) ? d : [d, 0];
            if (state === 2) return <MiniCell key={i} $color="#fff"><MiniToday>{label}</MiniToday></MiniCell>;
            const weekend = i === 0 || i === 6;
            return <MiniCell key={i} $color={state === 1 ? '#adadad' : weekend ? '#666' : '#333'}>{label}</MiniCell>;
          })}
        </React.Fragment>
      ))}
    </MiniGrid>
  </MiniCal>
);

const CalendarList = () => (
  <Sidebar>
    {SIDEBAR.map((group, g) => (
      <React.Fragment key={group.name}>
        <GroupName $first={g === 0}>{group.name}</GroupName>
        {group.items.map(item => (
          <CalendarRow key={item.label} $selected={item.selected} $nested={item.nested}>
            {item.expander && <Expander />}
            <CheckBox $color={item.color}>{item.checked && <CheckMark />}</CheckBox>
            {item.label}
            {item.feed && (
              <FeedIcon width="34" height="34" viewBox="0 0 32 32" fill="none" stroke="#8a8a8a" strokeWidth="2.500">
                <circle cx="5" cy="27" r="3" fill="#8a8a8a" stroke="none" />
                <path d="M10 16c4 2 6 6 6 13M16 9c6 4 9 11 9 20M22 2c6 6 9 16 8 27" />
              </FeedIcon>
            )}
          </CalendarRow>
        ))}
      </React.Fragment>
    ))}
    <MiniMonth />
  </Sidebar>
);

/* ---------- month view ---------- */

const Month = styled.section`
  flex: 1;
  min-width: 0;
  display: flex;
  flex-direction: column;
`;

const MonthHead = styled.div`
  height: 159px;
  flex: none;
  display: flex;
  flex-direction: column;
`;

const TitleRow = styled.div`
  height: 98px;
  display: flex;
  align-items: center;
  justify-content: space-between;
  padding: 9px 29px 0 30px;
`;

const Title = styled.h1`
  margin: 0;
  font-size: 62px;
  font-weight: 400;
  letter-spacing: -1.4px;
  color: #111;
`;

const TitleYear = styled.span`
  font-weight: 200;
`;

const NavCluster = styled.div`
  display: flex;
  gap: 3px;
  margin-top: -3px;
`;

const NavButton = styled.button`
  height: 38px;
  width: ${p => p.$width}px;
  padding: 0;
  border: none;
  border-radius: 5px;
  background: #fff;
  box-shadow: 0 0 0 1px #e6e6e6, 0 2px 0 #d2d2d2;
  font: 26px ${SANS};
  color: #333;
  display: flex;
  align-items: center;
  justify-content: center;
`;

const WeekdayRow = styled.div`
  display: grid;
  grid-template-columns: repeat(7, 1fr);
  height: 56px;
`;

const Weekday = styled.div`
  text-align: right;
  padding-right: 20px;
  font-size: 31px;
  line-height: 56px;
  font-weight: 300;
  color: ${p => (p.$weekend ? '#bdbdbd' : '#333')};
`;

const Week = styled.div`
  height: ${p => p.$height}px;
  flex: none;
  border-top: 2px solid ${p => (p.$strong ? '#c8c8c8' : '#e8e8e8')};
  display: grid;
  grid-template-columns: repeat(7, 1fr);
  grid-template-rows: 63px repeat(5, 34px) 1fr;
`;

const DayCell = styled.div`
  grid-column: ${p => p.$col};
  grid-row: 1 / -1;
  background: ${p => (p.$weekend ? '#f4f4f4' : '#fff')};
  border-left: ${p => (p.$col === 1 ? 'none' : '2px solid #ececec')};
  display: flex;
  align-items: flex-start;
  padding: 10px 20px 0 ${p => (p.$col === 1 ? 10 : 8)}px;
`;

const WeekNum = styled.span`
  width: 43px;
  margin-left: 12px;
  font-size: 26px;
  line-height: 38px;
  color: #b4b4b4;
`;

const Lunar = styled.span`
  font-size: 27px;
  line-height: 38px;
  height: ${p => (p.$first ? 44 : 38)}px;
  color: ${p => p.$color};
  border-bottom: ${p => (p.$first ? '3px solid #dd3340' : 'none')};
`;

const DateNum = styled.span`
  margin-left: auto;
  margin-top: 1px;
  font-size: 31px;
  line-height: 38px;
  color: ${p => p.$color};
`;

const TodayNum = styled.span`
  margin-left: auto;
  margin-top: -5px;
  margin-right: -12px;
  width: 50px;
  height: 50px;
  border-radius: 50%;
  background: #f0332e;
  color: #fff;
  font-size: 30px;
  display: flex;
  align-items: center;
  justify-content: center;
`;

const BAR_COLORS = {
  peach: '#e8d9cd',
  green: '#dff1d4',
  sage: '#cdd7cd',
  blue: '#d0dcea',
  lavender: '#ced5e6',
  selected: '#3866ac',
  dot: 'transparent',
};

const EventBar = styled.div`
  grid-column: ${p => p.$col} / span ${p => p.$span};
  grid-row: ${p => p.$row + 2};
  height: 32px;
  z-index: 1;
  min-width: 0;
  margin-left: ${p => p.$left}px;
  margin-right: ${p => p.$right}px;
  padding-left: ${p => p.$padLeft}px;
  padding-right: ${p => p.$padRight}px;
  background: ${p => BAR_COLORS[p.$kind]};
  color: ${p => (p.$kind === 'selected' ? '#fff' : '#161616')};
  display: flex;
  align-items: center;
  font-size: 24px;
  white-space: pre;
`;

const Dot = styled.span`
  width: 10px;
  height: 10px;
  border-radius: 50%;
  margin-right: 11px;
  flex: none;
  background: ${p => p.$color};
`;

const FbBadge = styled.span`
  width: 16px;
  height: 17px;
  border-radius: 2px;
  margin-right: 9px;
  flex: none;
  background: #3b5a9a;
  color: #fff;
  display: flex;
  align-items: flex-end;
  justify-content: flex-end;
  overflow: hidden;
`;

const Seg = styled.div`
  flex: ${p => (p.$width ? `0 0 ${p.$width}px` : '1')};
  min-width: 0;
  display: flex;
  align-items: center;
  justify-content: space-between;
`;

const EventTitle = styled.span`
  flex: none;
  letter-spacing: -0.05px;
`;

const EventTime = styled.span`
  font-size: 21px;
  letter-spacing: -0.35px;
  color: ${p => (p.$light ? '#fff' : 'rgba(0, 0, 0, 0.38)')};
  flex: none;
`;

const Ends = styled(EventTime)`
  margin-left: auto;
`;

const CalendarEvent = ({ ev }) => {
  const span = ev.span || 1;
  const isDot = ev.kind === 'dot' || ev.kind === 'selected';
  const light = ev.kind === 'selected';
  let left = ev.openLeft ? 0 : 14;
  let padLeft = ev.openLeft ? 35 : 21;
  let right = ev.openRight ? 0 : 12;
  let padRight = ev.openRight ? 19 : 10;
  if (ev.pad) padRight = ev.pad;
  if (ev.kind === 'dot') {
    left = ev.fb ? 13 : 15;
    padLeft = 0;
    right = 0;
    padRight = 16;
  }
  if (ev.kind === 'selected') {
    left = 3;
    right = 12;
    padLeft = 12;
    padRight = 7;
  }
  if (ev.kind === 'lavender') padLeft = 11;

  const segWidth = span > 1 ? (ev.fb ? 283 : 299) : 0;

  return (
    <EventBar $col={ev.col} $span={span} $row={ev.row} $kind={ev.kind} $left={left} $right={right} $padLeft={padLeft} $padRight={padRight}>
      {isDot && !ev.fb && <Dot $color={ev.dot} />}
      {ev.fb && (
        <FbBadge><FaFacebookF size={14} /></FbBadge>
      )}
      <Seg $width={segWidth}>
        <EventTitle>{ev.title}</EventTitle>
        {ev.time && <EventTime $light={light}>{ev.time}</EventTime>}
      </Seg>
      {ev.ends && <Ends>{ev.ends}</Ends>}
    </EventBar>
  );
};

const CalendarWeek = ({ week }) => (
  <Week $height={week.height} $strong={week.strong}>
    {week.days.map(([lunar, num, muted, flag], i) => {
      const weekend = i === 0 || i === 6;
      const lunarColor = muted ? '#c2c2c2' : weekend ? '#9c9c9c' : '#333';
      const numColor = muted ? '#c2c2c2' : weekend ? '#8c8c8c' : '#222';
      return (
        <DayCell key={i} $col={i + 1} $weekend={weekend}>
          {i === 0 && <WeekNum>{week.num}</WeekNum>}
          <Lunar $color={lunarColor} $first={flag === 'first'}>{lunar}</Lunar>
          {flag === 'today' ? <TodayNum>{num}</TodayNum> : <DateNum $color={numColor}>{num}</DateNum>}
        </DayCell>
      );
    })}
    {week.events.map((ev, i) => <CalendarEvent key={i} ev={ev} />)}
  </Week>
);

export default function App() {
  return (
    <Root>
      <GlobalStyle />
      <TopMenu />
      <Desktop>
        <LeftDock />
        <Window>
          <Toolbar>
            <Light $color="#f5524d" />
            <Light $color="#f9b22b" />
            <Light $color="#31c440" />
            <ToolButton $width={150} $gap={12}>Calendars</ToolButton>
            <ToolButton $width={50} $gap={16}><Plus size={30} strokeWidth={1.6} /></ToolButton>
            <Segments>
              <Segment $first>Day</Segment>
              <Segment>Week</Segment>
              <Segment $active>Month</Segment>
              <Segment>Year</Segment>
            </Segments>
            <SearchBox><Search size={26} strokeWidth={1.8} color="#777" />Search</SearchBox>
          </Toolbar>
          <Body>
            <CalendarList />
            <Month>
              <MonthHead>
                <TitleRow>
                  <Title>March <TitleYear>2016</TitleYear></Title>
                  <NavCluster>
                    <NavButton $width={45}><ChevronLeft size={28} strokeWidth={2} /></NavButton>
                    <NavButton $width={122}>Today</NavButton>
                    <NavButton $width={41}><ChevronRight size={28} strokeWidth={2} /></NavButton>
                  </NavCluster>
                </TitleRow>
                <WeekdayRow>
                  {WEEKDAYS.map((d, i) => (
                    <Weekday key={d} $weekend={i === 0 || i === 6}>{d}</Weekday>
                  ))}
                </WeekdayRow>
              </MonthHead>
              {WEEKS.map(w => <CalendarWeek key={w.num} week={w} />)}
            </Month>
          </Body>
        </Window>
      </Desktop>
    </Root>
  );
}
